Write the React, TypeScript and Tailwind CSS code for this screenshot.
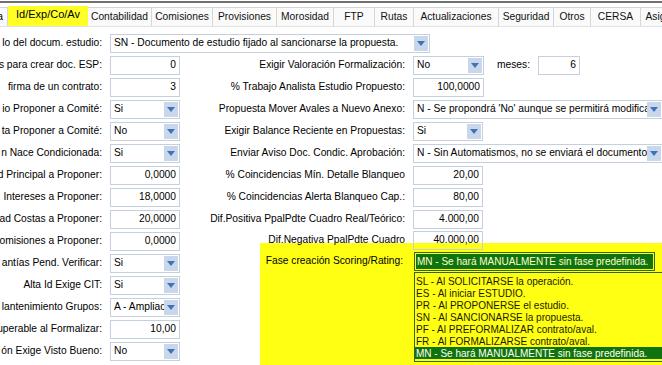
import type { ReactNode } from "react";

const tabs = [
  { label: "Contabilidad", w: "w-[64px]" },
  { label: "Comisiones", w: "w-[61px]" },
  { label: "Provisiones", w: "w-[64px]" },
  { label: "Morosidad", w: "w-[57px]" },
  { label: "FTP", w: "w-[41px]" },
  { label: "Rutas", w: "w-[39px]" },
  { label: "Actualizaciones", w: "w-[85px]" },
  { label: "Seguridad", w: "w-[55px]" },
  { label: "Otros", w: "w-[37px]" },
  { label: "CERSA", w: "w-[50px]" },
  { label: "Asignación", w: "w-[60px]" },
];

const fases = [
  "SL - Al SOLICITARSE la operación.",
  "ES - Al iniciar ESTUDIO.",
  "PR - Al PROPONERSE el estudio.",
  "SN - Al SANCIONARSE la propuesta.",
  "PF - Al PREFORMALIZAR contrato/aval.",
  "FR - Al FORMALIZARSE contrato/aval.",
  "MN - Se hará MANUALMENTE sin fase predefinida.",
];

function Arrow() {
  return (
    <svg width="8" height="5" viewBox="0 0 8 5">
      <path d="M0 0h8L4 5z" fill="#3f72bb" />
    </svg>
  );
}

function Combo({ value, className }: { value: string; className: string }) {
  return (
    <div
      className={`flex h-[19px] shrink-0 items-center border border-[#c5d0de] bg-white pr-[1px] pl-[3px] ${className}`}
    >
      <span className="min-w-0 flex-1 overflow-hidden whitespace-nowrap">{value}</span>
      <span className="flex h-[15px] w-[14px] shrink-0 items-center justify-center bg-[#c8d7ea]">
        <Arrow />
      </span>
    </div>
  );
}

function Field({ value, className }: { value: string; className: string }) {
  return (
    <div
      className={`flex h-[19px] shrink-0 items-center justify-end border border-[#c5d0de] pr-[3px] ${className}`}
    >
      {value}
    </div>
  );
}

function Row({
  label,
  labelClass,
  className = "",
  children,
}: {
  label: string;
  labelClass: string;
  className?: string;
  children: ReactNode;
}) {
  return (
    <div className={`flex h-[22px] items-center gap-[8px] ${className}`}>
      <div className={`flex shrink-0 justify-end overflow-hidden ${labelClass}`}>
        <span className="shrink-0 whitespace-nowrap">{label}</span>
      </div>
      {children}
    </div>
  );
}

// Arial Narrow look: Liberation Sans squeezed horizontally
function Narrow({ children }: { children: ReactNode }) {
  return (
    <span className="inline-block origin-left scale-x-[0.87] whitespace-nowrap">{children}</span>
  );
}

export default function App() {
  const left = "w-[102px]";
  const right = "w-[225px]";

  return (
    <div className="relative h-[365px] w-[662px] overflow-hidden bg-white font-['Liberation_Sans',Arial,sans-serif] text-[10.25px] leading-none text-black">
      <div className="mt-[1px] h-[2px] bg-[#707070]" />

      <nav className="flex h-[24px] items-end overflow-hidden border-b border-[#e2e2e2]">
        <div className="flex h-[19px] w-[8px] shrink-0 items-center justify-end overflow-hidden border-t border-r border-[#d6d6d6] bg-[#fafafa]">
          <span className="shrink-0 pr-[4px] whitespace-nowrap">la</span>
        </div>
        <div className="flex h-[20px] w-[80px] shrink-0 items-center justify-center bg-[#ffff26] pb-[3px] text-[11px]">
          Id/Exp/Co/Av
        </div>
        {tabs.map((tab) => (
          <div
            key={tab.label}
            className={`flex h-[19px] shrink-0 items-center justify-center border-t border-r border-[#d6d6d6] bg-[#fafafa] whitespace-nowrap text-[#111] ${tab.w}`}
          >
            {tab.label}
          </div>
        ))}
      </nav>

      <div className="mt-[5px]">
        <Row label="lo del docum. estudio:" labelClass={left}>
          <Combo
            value="SN - Documento de estudio fijado al sancionarse la propuesta."
            className="w-[320px]"
          />
        </Row>

        <div className="flex">
          <div className="w-[180px] shrink-0">
            <Row label="s para crear doc. ESP:" labelClass={left}>
              <Field value="0" className="w-[70px]" />
            </Row>
            <Row label="firma de un contrato:" labelClass={left}>
              <Field value="3" className="w-[70px]" />
            </Row>
            <Row label="io Proponer a Comité:" labelClass={left}>
              <Combo value="Si" className="w-[70px]" />
            </Row>
            <Row label="ta Proponer a Comité:" labelClass={left}>
              <Combo value="No" className="w-[70px]" />
            </Row>
            <Row label="n Nace Condicionada:" labelClass={left}>
              <Combo value="Si" className="w-[70px]" />
            </Row>
            <Row label="d Principal a Proponer:" labelClass={left}>
              <Field value="0,0000" className="w-[70px]" />
            </Row>
            <Row label="Intereses a Proponer:" labelClass={left}>
              <Field value="18,0000" className="w-[70px]" />
            </Row>
            <Row label="ad Costas a Proponer:" labelClass={left}>
              <Field value="20,0000" className="w-[70px]" />
            </Row>
            <Row label="omisiones a Proponer:" labelClass={left}>
              <Field value="0,0000" className="w-[70px]" />
            </Row>
            <Row label="antías Pend. Verificar:" labelClass={left}>
              <Combo value="Si" className="w-[70px]" />
            </Row>
            <Row label="Alta Id Exige CIT:" labelClass={left}>
              <Combo value="Si" className="w-[70px]" />
            </Row>
            <Row label="lantenimiento Grupos:" labelClass={left}>
              <Combo value="A - Ampliación" className="w-[70px]" />
            </Row>
            <Row label="uperable al Formalizar:" labelClass={left}>
              <Field value="10,00" className="w-[70px]" />
            </Row>
            <Row label="ón Exige Visto Bueno:" labelClass={left}>
              <Combo value="No" className="w-[70px]" />
            </Row>
          </div>

          <div className="min-w-0 flex-1">
            <Row label="Exigir Valoración Formalización:" labelClass={right}>
              <Combo value="No" className="w-[71px]" />
              <span className="ml-[5px] whitespace-nowrap">meses:</span>
              <Field value="6" className="w-[42px]" />
            </Row>
            <Row label="% Trabajo Analista Estudio Propuesto:" labelClass={right}>
              <Field value="100,0000" className="w-[71px]" />
            </Row>
            <Row label="Propuesta Mover Avales a Nuevo Anexo:" labelClass={right}>
              <Combo
                value="N - Se propondrá 'No' aunque se permitirá modificar"
                className="w-[250px]"
              />
            </Row>
            <Row label="Exigir Balance Reciente en Propuestas:" labelClass={right}>
              <Combo value="Si" className="w-[70px]" />
            </Row>
            <Row label="Enviar Aviso Doc. Condic. Aprobación:" labelClass={right}>
              <Combo
                value="N - Sin Automatismos, no se enviará el documento"
                className="w-[250px]"
              />
            </Row>
            <Row label="% Coincidencias Mín. Detalle Blanqueo" labelClass={right}>
              <Field value="20,00" className="w-[70px]" />
            </Row>
            <Row label="% Coincidencias Alerta Blanqueo Cap.:" labelClass={right}>
              <Field value="80,00" className="w-[70px]" />
            </Row>
            <Row label="Dif.Positiva PpalPdte Cuadro Real/Teórico:" labelClass={right}>
              <Field value="4.000,00" className="w-[70px]" />
            </Row>
            <Row
              label="Dif.Negativa PpalPdte Cuadro"
              labelClass={right}
              className="relative z-20 -mt-[1px]"
            >
              <Field value="40.000,00" className="w-[70px]" />
            </Row>

            <section className="relative z-10 -mt-[8px] ml-[80px] h-[130px] bg-[#ffff14] pt-[9px]">
              <div className="flex items-center gap-[11px]">
                <div className="w-[143px] shrink-0 text-right whitespace-nowrap">
                  Fase creación Scoring/Rating:
                </div>
                <div className="h-[19px] w-[241px] shrink-0 border border-[#2f6a1c] p-[1px]">
                  <div className="flex h-full items-center overflow-hidden bg-[#0f7410] pl-[1px] text-[11.5px] text-[#ffffc8]">
                    <Narrow>MN - Se hará MANUALMENTE sin fase predefinida.</Narrow>
                  </div>
                </div>
              </div>
              <ul className="mt-[1px] ml-[154px] w-[260px] border border-[#2f6a1c] py-[2px] text-[11.5px] leading-[12px] text-[#1b1b00]">
                {fases.map((fase, i) => (
                  <li
                    key={fase}
                    className={`h-[12px] overflow-hidden pl-[1px] ${
                      i === fases.length - 1 ? "bg-[#0f7410] text-[#fffff0]" : ""
                    }`}
                  >
                    <Narrow>{fase}</Narrow>
                  </li>
                ))}
              </ul>
            </section>
          </div>
        </div>
      </div>
    </div>
  );
}
